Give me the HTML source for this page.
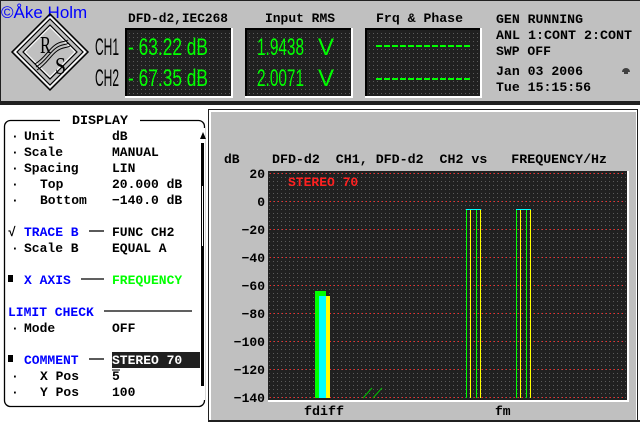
<!DOCTYPE html>
<html><head><meta charset="utf-8"><style>
html,body{margin:0;padding:0;background:#fff;width:640px;height:422px;overflow:hidden}
svg{display:block}
.m{font-family:"Liberation Mono",monospace;font-weight:bold;font-size:13px}
</style></head><body>
<svg width="640" height="422" viewBox="0 0 640 422" xmlns="http://www.w3.org/2000/svg">
<defs>
<pattern id="dots" width="4" height="4" patternUnits="userSpaceOnUse">
<rect width="4" height="4" fill="#202020"/><rect x="1" y="1" width="1" height="1" fill="#5a5a5a"/>
</pattern>
</defs>
<rect x="0" y="0" width="640" height="102" fill="#c0c0c0"/>
<rect x="0" y="0" width="640" height="1" fill="#202020"/>
<rect x="0" y="0" width="1" height="102" fill="#202020"/>
<rect x="0" y="101" width="640" height="4" fill="#202020"/>
<text x="1" y="18" font-family="Liberation Sans,sans-serif" font-size="17" fill="#0000ff">©Åke Holm</text>
<g fill="none">
<path d="M50 14 L88 52 L50 90 L12 52 Z" stroke="#000" stroke-width="1.5"/>
<path d="M50 17 L85 52 L50 87 L15 52 Z" stroke="#fff" stroke-width="1.5"/>
<path d="M50 19 L83 52 L50 85 L17 52 Z" stroke="#000" stroke-width="1.2"/>
<path d="M50 25 L77 52 L50 79 L23 52 Z" stroke="#000" stroke-width="1.2"/>
<path d="M50 27 L75 52 L50 77 L25 52 Z" stroke="#fff" stroke-width="1"/>
<path d="M35 64 C45 58 48 50 55 45 C60 41 65 42 68 40" stroke="#000" stroke-width="1"/>
<path d="M36 67 C46 61 49 53 56 48 C61 44 66 45 69 43" stroke="#000" stroke-width="1"/>
<path d="M37 70 C47 64 50 56 57 51 C62 47 67 48 70 46" stroke="#000" stroke-width="1"/>
</g>
<text x="40" y="53" font-family="Liberation Serif,serif" font-size="24" fill="#000" textLength="11" lengthAdjust="spacingAndGlyphs">R</text>
<text x="55" y="74" font-family="Liberation Serif,serif" font-size="24" fill="#000" textLength="11" lengthAdjust="spacingAndGlyphs">S</text>
<text x="95" y="55" font-family="Liberation Sans,sans-serif" font-size="24" fill="#000" textLength="24" lengthAdjust="spacingAndGlyphs">CH1</text>
<text x="95" y="86" font-family="Liberation Sans,sans-serif" font-size="24" fill="#000" textLength="24" lengthAdjust="spacingAndGlyphs">CH2</text>
<text class="m" x="128" y="22" textLength="100" lengthAdjust="spacingAndGlyphs">DFD-d2,IEC268</text>
<text class="m" x="265" y="22" textLength="70" lengthAdjust="spacingAndGlyphs">Input RMS</text>
<text class="m" x="376" y="22" textLength="87" lengthAdjust="spacingAndGlyphs">Frq &amp; Phase</text>
<text class="m" x="496" y="23" textLength="87" lengthAdjust="spacingAndGlyphs">GEN RUNNING</text>
<text class="m" x="496" y="39" textLength="136" lengthAdjust="spacingAndGlyphs">ANL 1:CONT 2:CONT</text>
<text class="m" x="496" y="55" textLength="55" lengthAdjust="spacingAndGlyphs">SWP OFF</text>
<text class="m" x="496" y="75" textLength="87" lengthAdjust="spacingAndGlyphs">Jan 03 2006</text>
<text class="m" x="496" y="91" textLength="95" lengthAdjust="spacingAndGlyphs">Tue 15:15:56</text>
<path d="M622 72 A4 4 0 0 1 630 72 Z" fill="#404040"/><rect x="624" y="72" width="4" height="2" fill="#404040"/>
<g>
<rect x="125" y="28" width="108" height="70" fill="#fff"/><rect x="125" y="28" width="106" height="68" fill="#000"/><rect x="127" y="30" width="104" height="66" fill="url(#dots)"/>
<rect x="245" y="28" width="108" height="70" fill="#fff"/><rect x="245" y="28" width="106" height="68" fill="#000"/><rect x="247" y="30" width="104" height="66" fill="url(#dots)"/>
<rect x="365" y="28" width="117" height="70" fill="#fff"/><rect x="365" y="28" width="115" height="68" fill="#000"/><rect x="367" y="30" width="113" height="66" fill="url(#dots)"/>
</g>
<g font-family="Liberation Sans,sans-serif" font-size="24" fill="#00ff00">
<text x="128" y="55" textLength="80" lengthAdjust="spacingAndGlyphs">- 63.22 dB</text>
<text x="128" y="86" textLength="80" lengthAdjust="spacingAndGlyphs">- 67.35 dB</text>
<text x="257" y="55" textLength="47" lengthAdjust="spacingAndGlyphs">1.9438</text>
<text x="257" y="86" textLength="47" lengthAdjust="spacingAndGlyphs">2.0071</text>
<text x="318" y="55">V</text>
<text x="318" y="86">V</text>
</g>
<line x1="376" y1="46" x2="472" y2="46" stroke="#00ff00" stroke-width="2" stroke-dasharray="6 2"/>
<line x1="376" y1="79" x2="472" y2="79" stroke="#00ff00" stroke-width="2" stroke-dasharray="6 2"/>
<rect x="4.5" y="120.5" width="200" height="286" rx="6" fill="none" stroke="#000" stroke-width="1.3"/>
<rect x="60" y="112" width="80" height="14" fill="#fff"/>
<text class="m" x="72" y="124" textLength="56" lengthAdjust="spacingAndGlyphs">DISPLAY</text>
<rect x="198" y="128" width="7" height="272" fill="#fff"/>
<path d="M200 139 L203 132 L206 139 Z" fill="#000"/>
<rect x="201" y="143" width="3" height="243" fill="#000"/>
<rect x="202" y="186" width="1" height="60" fill="#fff"/>
<g class="m">
<text x="11" y="140">·</text><text x="24" y="140">Unit</text><text x="112" y="140">dB</text>
<text x="11" y="156">·</text><text x="24" y="156">Scale</text><text x="112" y="156">MANUAL</text>
<text x="11" y="172">·</text><text x="24" y="172">Spacing</text><text x="112" y="172">LIN</text>
<text x="11" y="188">·</text><text x="40" y="188">Top</text><text x="112" y="188">20.000 dB</text>
<text x="11" y="204">·</text><text x="40" y="204">Bottom</text><text x="112" y="204">−140.0 dB</text>
<text x="8" y="236">√</text><text x="24" y="236" fill="#0000ff">TRACE B</text><text x="112" y="236">FUNC CH2</text>
<text x="11" y="252">·</text><text x="24" y="252">Scale B</text><text x="112" y="252">EQUAL A</text>
<text x="24" y="284" fill="#0000ff">X AXIS</text><text x="112" y="284" fill="#00ff00">FREQUENCY</text>
<text x="8" y="316" fill="#0000ff">LIMIT CHECK</text>
<text x="11" y="332">·</text><text x="24" y="332">Mode</text><text x="112" y="332">OFF</text>
<text x="24" y="364" fill="#0000ff">COMMENT</text>
<text x="11" y="380">·</text><text x="40" y="380">X Pos</text><text x="112" y="380">5</text>
<text x="11" y="396">·</text><text x="40" y="396">Y Pos</text><text x="112" y="396">100</text>
</g>
<line x1="89" y1="231" x2="104" y2="231" stroke="#000" stroke-width="1.3"/>
<line x1="81" y1="279" x2="104" y2="279" stroke="#000" stroke-width="1.3"/>
<line x1="104" y1="311" x2="192" y2="311" stroke="#000" stroke-width="1.3"/>
<line x1="89" y1="359" x2="104" y2="359" stroke="#000" stroke-width="1.3"/>
<rect x="8" y="275" width="5" height="7" fill="#000"/>
<rect x="8" y="355" width="5" height="7" fill="#000"/>
<rect x="112" y="352" width="88" height="16" fill="#202020"/>
<text class="m" x="112" y="364" fill="#fff">STEREO 70</text>
<line x1="112" y1="370" x2="120" y2="370" stroke="#000"/>
<rect x="208" y="109" width="430" height="313" fill="#202020"/>
<rect x="209" y="110" width="428" height="311" fill="#fff"/>
<rect x="211" y="112" width="425" height="308" fill="#c0c0c0"/>
<rect x="208" y="420" width="432" height="2" fill="#202020"/>
<text class="m" x="224" y="163">dB</text>
<text class="m" x="272" y="163" style="white-space:pre" xml:space="preserve" textLength="335" lengthAdjust="spacingAndGlyphs">DFD-d2  CH1, DFD-d2  CH2 vs   FREQUENCY/Hz</text>
<rect x="268" y="171" width="361" height="231" fill="#fff"/>
<rect x="268" y="171" width="359" height="229" fill="url(#dots)"/>
<g stroke="#ff2020" stroke-width="1" stroke-dasharray="1 3">
<line x1="270" y1="173.5" x2="626" y2="173.5"/><line x1="270" y1="201.5" x2="626" y2="201.5"/>
<line x1="270" y1="229.5" x2="626" y2="229.5"/><line x1="270" y1="257.5" x2="626" y2="257.5"/>
<line x1="270" y1="285.5" x2="626" y2="285.5"/><line x1="270" y1="313.5" x2="626" y2="313.5"/>
<line x1="270" y1="341.5" x2="626" y2="341.5"/><line x1="270" y1="369.5" x2="626" y2="369.5"/>
<line x1="270" y1="397.5" x2="626" y2="397.5"/>
</g>
<g class="m" text-anchor="end">
<text x="265" y="178">20</text><text x="265" y="206">0</text><text x="265" y="234">−20</text>
<text x="265" y="262">−40</text><text x="265" y="290">−60</text><text x="265" y="318">−80</text>
<text x="265" y="346">−100</text><text x="265" y="374">−120</text><text x="265" y="402">−140</text>
</g>
<text class="m" x="288" y="186" fill="#ff2020">STEREO 70</text>
<rect x="315" y="291" width="11" height="107" fill="#00ff00"/>
<rect x="319" y="296" width="7" height="102" fill="#00ffff"/>
<rect x="326" y="296" width="4" height="102" fill="#ffff00"/>
<g stroke-width="1">
<line x1="466.5" y1="209" x2="466.5" y2="398" stroke="#00ff00"/>
<line x1="470.5" y1="209" x2="470.5" y2="398" stroke="#ffff00"/>
<line x1="476.5" y1="209" x2="476.5" y2="398" stroke="#00ff00"/>
<line x1="480.5" y1="209" x2="480.5" y2="398" stroke="#ffff00"/>
<line x1="466" y1="209.5" x2="481" y2="209.5" stroke="#00ffff"/>
<line x1="516.5" y1="209" x2="516.5" y2="398" stroke="#00ff00"/>
<line x1="520.5" y1="209" x2="520.5" y2="398" stroke="#ffff00"/>
<line x1="526.5" y1="209" x2="526.5" y2="398" stroke="#00ff00"/>
<line x1="530.5" y1="209" x2="530.5" y2="398" stroke="#ffff00"/>
<line x1="516" y1="209.5" x2="531" y2="209.5" stroke="#00ffff"/>
<line x1="363" y1="398" x2="372" y2="388" stroke="#00c000"/>
<line x1="373" y1="398" x2="382" y2="388" stroke="#00c000"/>
</g>
<text class="m" x="304" y="415" textLength="40" lengthAdjust="spacingAndGlyphs">fdiff</text>
<text class="m" x="495" y="415">fm</text>
</svg>
</body></html>
